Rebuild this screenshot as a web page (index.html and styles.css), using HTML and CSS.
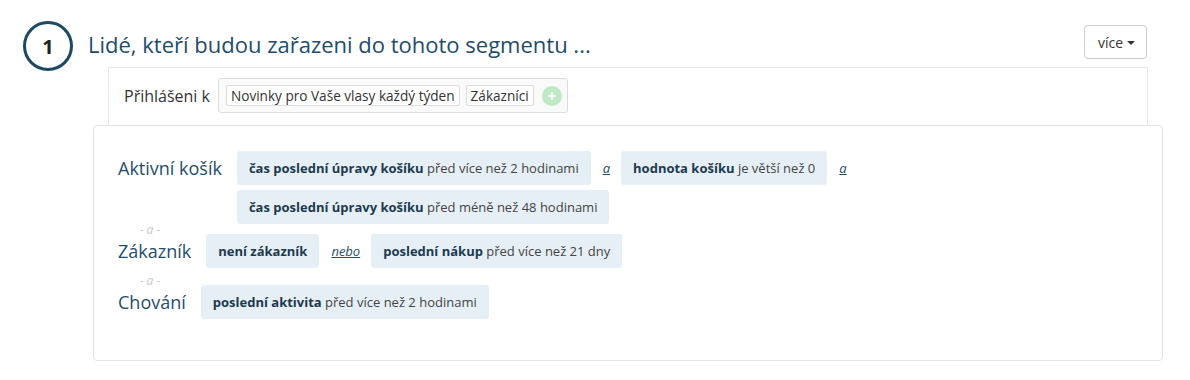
FILE: index.html
```html
<!DOCTYPE html>
<html lang="cs">
<head>
<meta charset="utf-8">
<title>Segment</title>
<link rel="stylesheet" href="styles.css">
</head>
<body>
<div class="page">
  <div class="header">
    <div class="step">1</div>
    <h1 class="title">Lidé, kteří budou zařazeni do tohoto segmentu ...</h1>
    <button class="more">více <span class="caret"></span></button>
  </div>

  <div class="lists">
    <span class="lists-label">Přihlášeni k</span>
    <div class="tagbox">
      <span class="tag">Novinky pro Vaše vlasy každý týden</span>
      <span class="tag">Zákazníci</span>
      <span class="add">
        <svg width="20" height="20" viewBox="0 0 20 20"><circle cx="10" cy="10" r="10" fill="#bfe8c4"/><path d="M10 6.5v7M6.5 10h7" stroke="#fff" stroke-width="1.6" stroke-linecap="round"/></svg>
      </span>
    </div>
  </div>

  <div class="rules">
    <div class="row">
      <div class="row-label">Aktivní košík</div>
      <div class="chips">
        <span class="chip"><b>čas poslední úpravy košíku</b> před více než 2 hodinami</span>
        <span class="conj">a</span>
        <span class="chip"><b>hodnota košíku</b> je větší než 0</span>
        <span class="conj">a</span>
        <span class="chip"><b>čas poslední úpravy košíku</b> před méně než 48 hodinami</span>
      </div>
    </div>
    <div class="sep sep-first">- a -</div>
    <div class="row">
      <div class="row-label">Zákazník</div>
      <div class="chips">
        <span class="chip"><b>není zákazník</b></span>
        <span class="conj">nebo</span>
        <span class="chip"><b>poslední nákup</b> před více než 21 dny</span>
      </div>
    </div>
    <div class="sep">- a -</div>
    <div class="row">
      <div class="row-label">Chování</div>
      <div class="chips">
        <span class="chip"><b>poslední aktivita</b> před více než 2 hodinami</span>
      </div>
    </div>
  </div>
</div>
</body>
</html>
```

FILE: styles.css
```css
html, body {
  margin: 0;
  padding: 0;
  background: #fff;
}

body {
  font-family: "Open Sans", "Noto Sans", sans-serif;
  color: #333;
}

.page {
  padding-top: 21px;
}

.header {
  display: flex;
  align-items: center;
  margin-left: 23px;
  width: 1124px;
  height: 50px;
  margin-bottom: -4px;
}

.step {
  box-sizing: border-box;
  width: 50px;
  height: 50px;
  border: 3px solid #1b4a63;
  border-radius: 50%;
  display: flex;
  align-items: center;
  justify-content: center;
  font-size: 20px;
  font-weight: 700;
  color: #222;
  flex: none;
}

.title {
  margin: 0 0 0 15px;
  padding-bottom: 4px;
  font-size: 22px;
  font-weight: 400;
  color: #1d4d6b;
  line-height: 30px;
}

.more {
  margin-left: auto;
  align-self: flex-start;
  margin-top: 4px;
  height: 34px;
  width: 63px;
  box-sizing: border-box;
  border: 1px solid #ccc;
  border-radius: 4px;
  background: #fff;
  font-family: inherit;
  font-size: 14px;
  color: #333;
  padding: 0 0 0 2px;
  display: flex;
  align-items: center;
  justify-content: center;
  gap: 4px;
}

.caret {
  width: 0;
  height: 0;
  border-left: 4px solid transparent;
  border-right: 4px solid transparent;
  border-top: 4px solid #333;
  margin-top: 1px;
}

.lists {
  margin-left: 108px;
  width: 1040px;
  box-sizing: border-box;
  border: 1px solid #e8e8e8;
  border-bottom: none;
  padding: 10px 0 12px 15px;
  display: flex;
  align-items: center;
}

.lists-label {
  font-size: 16px;
  color: #333;
  margin-right: 8px;
}

.tagbox {
  box-sizing: border-box;
  height: 35px;
  border: 1px solid #dcdcdc;
  border-radius: 3px;
  background: #fafafa;
  display: flex;
  align-items: center;
  padding: 0 5px 0 7px;
  gap: 6px;
}

.tag {
  box-sizing: border-box;
  height: 21px;
  line-height: 19px;
  border: 1px solid #ddd;
  border-radius: 2px;
  background: #fff;
  font-size: 13.6px;
  color: #333;
  padding: 0 4px;
}

.add {
  display: flex;
  margin-left: 2px;
}

.rules {
  margin-left: 93px;
  width: 1070px;
  box-sizing: border-box;
  border: 1px solid #e3e3e3;
  border-radius: 4px;
  padding: 25px 20px 41px 24px;
}

.row {
  display: flex;
  align-items: flex-start;
}

.row-label {
  font-size: 18px;
  color: #1f4e6b;
  line-height: 34px;
  margin-right: 15px;
  white-space: nowrap;
}

.chips {
  display: flex;
  flex-wrap: wrap;
  align-items: center;
  row-gap: 5px;
}

.chip {
  box-sizing: border-box;
  height: 34px;
  line-height: 34px;
  padding: 0 12px;
  background: #e6eff5;
  border-radius: 3px;
  font-size: 13px;
  color: #444;
  white-space: nowrap;
}

.chip b {
  color: #1c3a4f;
  font-weight: 700;
}

.conj {
  font-size: 13px;
  font-style: italic;
  text-decoration: underline;
  color: #1f4e6b;
  margin: 0 11px 0 12px;
}

.sep {
  width: 64px;
  text-align: center;
  font-size: 12px;
  font-style: italic;
  color: #c8c8c8;
  height: 17px;
  line-height: 26px;
}

.sep-first {
  height: 10px;
  line-height: 12px;
}
```
